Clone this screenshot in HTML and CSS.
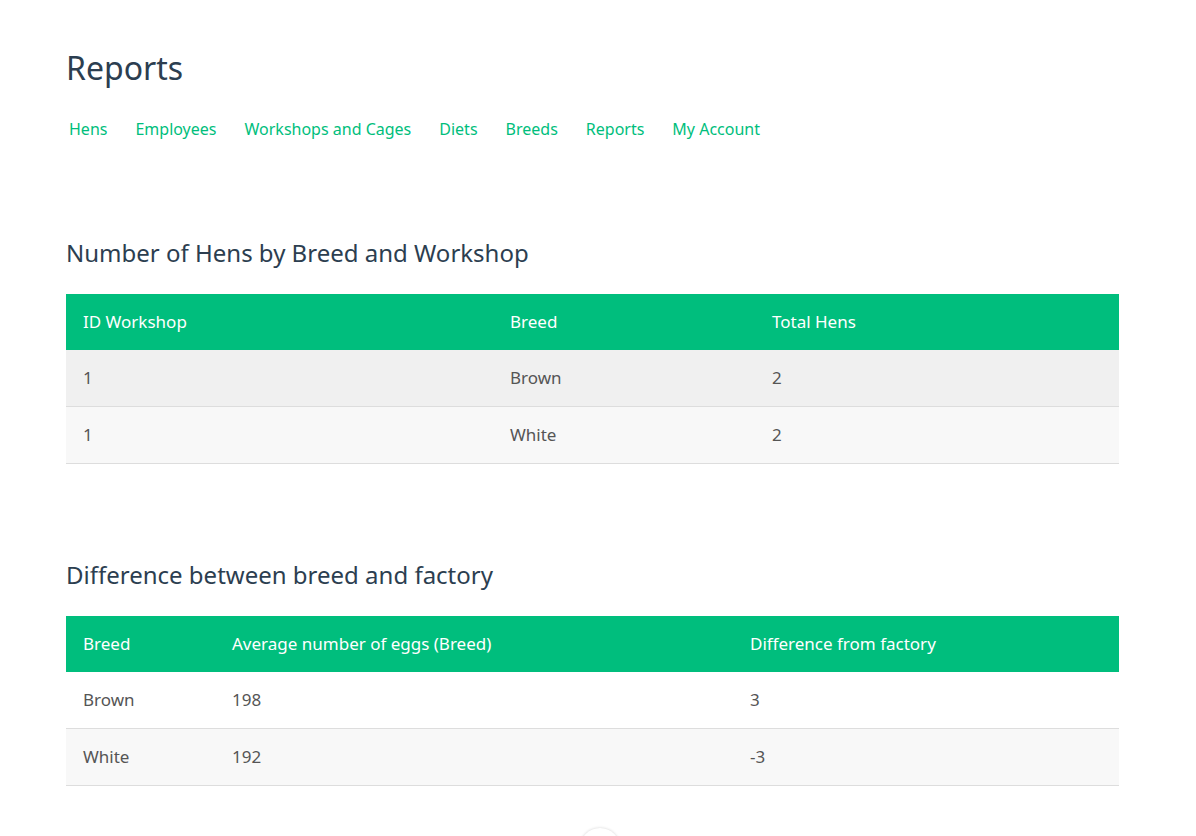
FILE: index.html
```html
<!DOCTYPE html>
<html lang="en">
<head>
<meta charset="utf-8">
<title>Reports</title>
<link rel="stylesheet" href="styles.css">
</head>
<body>
<div class="page">
  <h1 class="title">Reports</h1>
  <nav class="nav">
    <a href="#">Hens</a>
    <a href="#">Employees</a>
    <a href="#">Workshops and Cages</a>
    <a href="#">Diets</a>
    <a href="#">Breeds</a>
    <a href="#">Reports</a>
    <a href="#">My Account</a>
  </nav>

  <section class="report report-first">
    <h2 class="report-title">Number of Hens by Breed and Workshop</h2>
    <table class="grid grid-one">
      <thead>
        <tr><th class="c1">ID Workshop</th><th class="c2">Breed</th><th class="c3">Total Hens</th></tr>
      </thead>
      <tbody>
        <tr class="hover"><td>1</td><td>Brown</td><td>2</td></tr>
        <tr><td>1</td><td>White</td><td>2</td></tr>
      </tbody>
    </table>
  </section>

  <section class="report report-second">
    <h2 class="report-title">Difference between breed and factory</h2>
    <table class="grid grid-two">
      <thead>
        <tr><th class="c1">Breed</th><th class="c2">Average number of eggs (Breed)</th><th class="c3">Difference from factory</th></tr>
      </thead>
      <tbody>
        <tr><td>Brown</td><td>198</td><td>3</td></tr>
        <tr><td>White</td><td>192</td><td>-3</td></tr>
      </tbody>
    </table>
  </section>
</div>
<div class="fab"></div>
</body>
</html>
```
FILE: styles.css
```css
html, body {
  margin: 0;
  padding: 0;
  background: #ffffff;
}
body {
  font-family: "Noto Sans", "Open Sans", sans-serif;
  color: #2c3e50;
  overflow: hidden;
  height: 836px;
  position: relative;
}
.page {
  width: 1053px;
  margin-left: 66px;
  padding-top: 46px;
}
.title {
  margin: 0;
  font-size: 32px;
  font-weight: 400;
  line-height: 44px;
  color: #2c3e50;
}
.nav {
  display: flex;
  gap: 28px;
  margin-top: 28px;
  padding-left: 3px;
}
.nav a {
  color: #00be7c;
  text-decoration: none;
  font-size: 16px;
  line-height: 22px;
}
.report-first {
  margin-top: 97px;
}
.report-second {
  margin-top: 95px;
}
.report-title {
  margin: 0 0 25px 0;
  font-size: 24px;
  font-weight: 400;
  line-height: 32px;
  color: #2c3e50;
}
.grid {
  width: 100%;
  border-collapse: collapse;
  table-layout: fixed;
  font-size: 17px;
}
.grid th {
  background: #00be7d;
  color: #ffffff;
  font-weight: 400;
  text-align: left;
  height: 56px;
  padding: 0 17px 2px;
  box-sizing: border-box;
}
.grid td {
  color: #555555;
  line-height: 56px;
  padding: 0 17px;
  border-bottom: 1px solid #dddddd;
}
.grid tbody tr:nth-child(even) {
  background: #f8f8f8;
}
.grid tbody tr.hover {
  background: #f0f0f0;
}
.grid-one .c1 { width: 427px; }
.grid-one .c2 { width: 262px; }
.grid-one .c3 { width: 364px; }
.grid-two .c1 { width: 149px; }
.grid-two .c2 { width: 518px; }
.grid-two .c3 { width: 386px; }
.fab {
  position: absolute;
  left: 580px;
  top: 828px;
  width: 40px;
  height: 40px;
  border-radius: 50%;
  background: #ffffff;
  box-shadow: 0 0 3px rgba(0, 0, 0, 0.18);
}
```
